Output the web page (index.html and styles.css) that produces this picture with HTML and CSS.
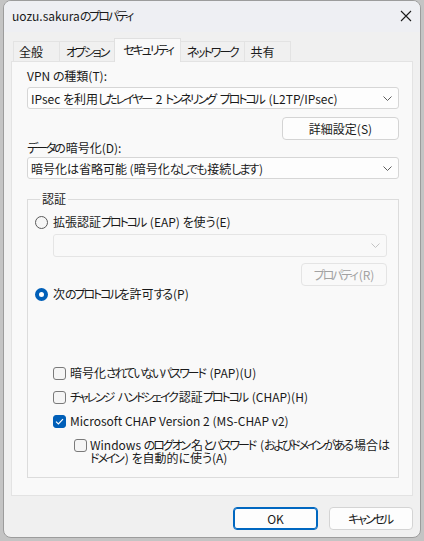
FILE: index.html
```html
<!DOCTYPE html>
<html lang="ja">
<head>
  <meta charset="UTF-8">
  <title>uozu.sakuraのプロパティ</title>
  <link rel="stylesheet" href="styles.css">
</head>
<body>
  <div class="window">
    <div class="titlebar">
      <span class="title">uozu.sakura<span class="kana">のプロパティ</span></span>
      <svg class="close" width="12" height="12" viewBox="0 0 12 12">
        <path d="M1 1 L11 11 M11 1 L1 11" stroke="#1b1b1b" stroke-width="1.1" fill="none"/>
      </svg>
    </div>

    <div class="client">
      <div class="tabs">
        <div class="tab">全般</div>
        <div class="tab"><span class="kana">オプション</span></div>
        <div class="tab active"><span class="kana">セキュリティ</span></div>
        <div class="tab"><span class="kana">ネットワーク</span></div>
        <div class="tab">共有</div>
      </div>

      <div class="panel">
        <div class="field-label">VPN <span class="kana">の</span>種類(T):</div>
        <div class="combo">
          <span>IPsec <span class="kana">を</span>利用<span class="kana">したレイヤー</span> 2 <span class="kana">トンネリング</span> <span class="kana">プロトコル</span> (L2TP/IPsec)</span>
          <svg class="chevron" width="9" height="5" viewBox="0 0 9 5"><path d="M0.5 0.5 L4.5 4.5 L8.5 0.5" stroke="#5d5d5d" fill="none"/></svg>
        </div>
        <div class="btn-row">
          <button class="btn btn-advanced">詳細設定(S)</button>
        </div>
        <div class="field-label"><span class="kana">データの</span>暗号化(D):</div>
        <div class="combo combo-tight">
          <span>暗号化<span class="kana">は</span>省略可能 (暗号化<span class="kana">なしでも</span>接続<span class="kana">します</span>)</span>
          <svg class="chevron" width="9" height="5" viewBox="0 0 9 5"><path d="M0.5 0.5 L4.5 4.5 L8.5 0.5" stroke="#5d5d5d" fill="none"/></svg>
        </div>

        <fieldset class="group">
          <legend>認証</legend>

          <div class="option">
            <span class="radio"></span>
            <span>拡張認証<span class="kana">プロトコル</span> (EAP) <span class="kana">を</span>使<span class="kana">う</span>(E)</span>
          </div>
          <div class="combo combo-disabled">
            <span></span>
            <svg class="chevron" width="9" height="5" viewBox="0 0 9 5"><path d="M0.5 0.5 L4.5 4.5 L8.5 0.5" stroke="#c4c4c4" fill="none"/></svg>
          </div>
          <div class="btn-row btn-row-eap">
            <button class="btn btn-disabled"><span class="kana">プロパティ</span>(R)</button>
          </div>
          <div class="option option-allow">
            <span class="radio checked"></span>
            <span>次<span class="kana">のプロトコルを</span>許可<span class="kana">する</span>(P)</span>
          </div>

          <div class="checks">
            <div class="check-row">
              <span class="box"></span>
              <span>暗号化<span class="kana">されていないパスワード</span> (PAP)(U)</span>
            </div>
            <div class="check-row">
              <span class="box"></span>
              <span><span class="kana">チャレンジ</span> <span class="kana">ハンドシェイク</span>認証<span class="kana">プロトコル</span> (CHAP)(H)</span>
            </div>
            <div class="check-row">
              <span class="box checked">
                <svg width="9" height="7" viewBox="0 0 9 7"><path d="M1 3.6 L3.4 6 L8 1.2" stroke="#fff" stroke-width="1.2" fill="none"/></svg>
              </span>
              <span>Microsoft CHAP Version 2 (MS-CHAP v2)</span>
            </div>
            <div class="check-row check-sub">
              <span class="box"></span>
              <span class="multi">Windows <span class="kana">のログオン</span>名<span class="kana">とパスワード</span> (<span class="kana">およびドメインがある</span>場合<span class="kana">は</span><br><span class="kana">ドメイン</span>) <span class="kana">を</span>自動的<span class="kana">に</span>使<span class="kana">う</span>(A)</span>
            </div>
          </div>
        </fieldset>
      </div>

      <div class="footer">
        <button class="btn btn-ok">OK</button>
        <button class="btn btn-cancel"><span class="kana">キャンセル</span></button>
      </div>
    </div>
  </div>
</body>
</html>
```

FILE: styles.css
```css
html, body {
  margin: 0;
  padding: 0;
}
body {
  background-color: #c4c4c4;
  font-family: "Noto Sans CJK JP", sans-serif;
  font-size: 12px;
  font-feature-settings: "palt";
  color: #1a1a1a;
  width: 424px;
  height: 541px;
  overflow: hidden;
}
/* kana runs are set tighter than kanji, like the UI font */
.kana {
  letter-spacing: -2.1px;
  padding-right: 2px;
}
.window {
  margin-left: 3px;
  width: 416px;
  height: 536px;
  border: 1px solid #9c9c9c;
  border-radius: 8px;
  background-color: #f0f0f0;
  overflow: hidden;
  display: flex;
  flex-direction: column;
}
.titlebar {
  height: 31px;
  background-color: #eeeff3;
  display: flex;
  align-items: center;
  justify-content: space-between;
  padding: 0 8px 0 8px;
  flex-shrink: 0;
}
.title {
  line-height: 16px;
  margin-top: -1px;
}
.close {
  margin-top: -2px;
}
.client {
  padding: 7px 7px 0 7px;
  flex: 1;
  display: flex;
  flex-direction: column;
}

/* tab strip */
.tabs {
  display: flex;
  align-items: flex-end;
  height: 22px;
  padding-left: 2px;
  position: relative;
  z-index: 1;
}
.tab {
  min-width: 47px;
  height: 20px;
  line-height: 19px;
  padding: 0 4px 0 6px;
  border: 1px solid #e3e3e3;
  border-bottom: none;
  margin-left: -1px;
  background-color: #f0f0f0;
  box-sizing: border-box;
  white-space: nowrap;
}
.tab:first-child {
  margin-left: 0;
  padding-left: 5px;
}
.tab.active {
  height: 24px;
  line-height: 22px;
  margin-bottom: -1px;
  padding: 0 5px 0 8px;
  background-color: #f9f9f9;
  border-color: #e0e0e0;
}
.panel {
  height: 435px;
  box-sizing: border-box;
  border: 1px solid #e3e3e3;
  background-color: #f9f9f9;
  padding: 6px 13px 0 15px;
}

/* labels, combos, buttons */
.field-label {
  line-height: 16px;
}
.combo {
  margin-top: 3px;
  height: 22px;
  box-sizing: border-box;
  border: 1px solid #d6d6d6;
  border-radius: 3px;
  background-color: #fdfdfd;
  display: flex;
  align-items: center;
  justify-content: space-between;
  padding: 0 6px 0 3px;
  white-space: nowrap;
}
.combo-tight {
  margin-top: 1px;
}
.chevron {
  flex-shrink: 0;
}
.btn-row {
  display: flex;
  justify-content: flex-end;
  margin-top: 8px;
}
.btn {
  font-family: inherit;
  font-size: 12px;
  font-feature-settings: "palt";
  color: #1a1a1a;
  background-color: #fdfdfd;
  border: 1px solid #d4d4d4;
  border-radius: 4px;
  height: 23px;
  padding: 0;
  box-sizing: border-box;
}
.btn-advanced {
  width: 117px;
}
.btn-disabled {
  width: 86px;
  color: #a2a2a2;
  background-color: #f9f9f9;
  border-color: #e4e4e4;
}

/* authentication group */
.group {
  margin: 12px 0 0 0;
  padding: 0 11px 0 7px;
  min-width: 0;
  height: 287px;
  box-sizing: border-box;
  border: 1px solid #dcdcdc;
  border-radius: 0;
}
.group legend {
  padding: 0 2px;
  margin-left: 5px;
  line-height: 16px;
}
.option {
  display: flex;
  align-items: center;
  height: 16px;
  line-height: 16px;
  margin-top: 7px;
  gap: 5px;
  white-space: nowrap;
}
.radio {
  width: 13px;
  height: 13px;
  box-sizing: border-box;
  border: 1px solid #5a5a5a;
  border-radius: 50%;
  background-color: #f6f6f6;
  flex-shrink: 0;
}
.radio.checked {
  border: 4px solid #005fb8;
  background-color: #fff;
}
.combo-disabled {
  margin: 4px 0 0 18px;
  height: 23px;
  background-color: #f9f9f9;
  border-color: #e5e5e5;
}
.btn-row-eap {
  margin-top: 6px;
}
.option-allow {
  margin-top: 0;
}
.checks {
  margin-top: 63px;
  padding-left: 18px;
}
.check-row {
  display: flex;
  align-items: center;
  gap: 4px;
  line-height: 16px;
  margin-bottom: 8px;
  white-space: nowrap;
}
.box {
  width: 13px;
  height: 13px;
  box-sizing: border-box;
  border: 1px solid #7a7a7a;
  border-radius: 3px;
  background-color: #f5f5f5;
  flex-shrink: 0;
  display: flex;
  align-items: center;
  justify-content: center;
}
.box.checked {
  border-color: #005fb8;
  background-color: #005fb8;
}
.check-sub {
  align-items: flex-start;
  padding-left: 21px;
  gap: 3px;
  margin-top: 9px;
}
.check-sub .box {
  margin-top: 1px;
}
.multi {
  line-height: 13px;
}

/* dialog buttons */
.footer {
  display: flex;
  justify-content: flex-end;
  gap: 11px;
  margin-top: 11px;
}
.btn-ok {
  width: 85px;
  border: 1px solid #0067c0;
  box-shadow: inset 0 0 0 1px #0067c0;
}
.btn-cancel {
  width: 84px;
}
```
